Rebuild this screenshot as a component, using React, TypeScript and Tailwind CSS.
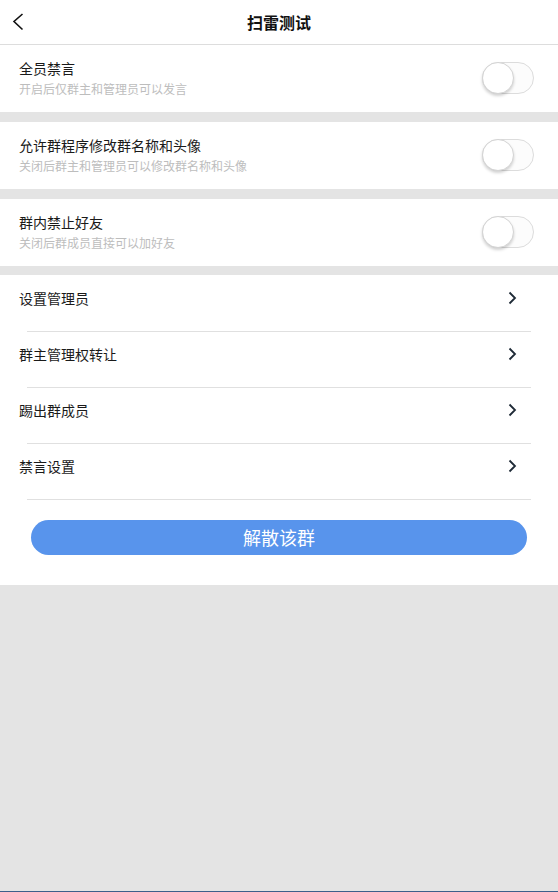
import React from "react";

const font = { fontFamily: '"Noto Sans CJK SC", "Noto Sans", sans-serif' };

function Toggle() {
  return (
    <div className="relative w-[52px] h-[32px] mb-[2px] rounded-full border border-[#dcdcdc] bg-[#fcfcfc] shrink-0">
      <div className="absolute left-[-1px] top-[-1px] w-[32px] h-[32px] rounded-full bg-white border border-[#d4d4d4] shadow-[0_2px_3px_rgba(0,0,0,0.18)]" />
    </div>
  );
}

function SwitchRow({ title, sub }: { title: string; sub: string }) {
  return (
    <div className="h-[67px] bg-white flex items-center justify-between pl-[19px] pr-[24px]">
      <div className="flex flex-col pb-[2px]">
        <div className="text-[14px] leading-[20px] text-[#1a1a1a]">{title}</div>
        <div className="text-[12px] leading-[18px] mt-[2px] text-[#bdbdbd]">{sub}</div>
      </div>
      <Toggle />
    </div>
  );
}

function Chevron() {
  return (
    <svg width="9" height="14" viewBox="0 0 9 14" className="shrink-0">
      <path d="M1.5 1.5 L7 7 L1.5 12.5" fill="none" stroke="#1e2a36" strokeWidth="1.8" />
    </svg>
  );
}

function LinkRow({ title }: { title: string }) {
  return (
    <div className="flex flex-col">
      <div className="h-[55px] flex items-center justify-between pl-[19px] pr-[41px] pb-[12px]">
        <span className="text-[14px] leading-[20px] text-[#1a1a1a]">{title}</span>
        <Chevron />
      </div>
      <div className="mx-[27px] h-px bg-[#e0e0e0]" />
    </div>
  );
}

export default function App() {
  return (
    <div style={font} className="w-[558px] h-[892px] flex flex-col bg-[#e4e4e4]">
      <div className="h-[44px] bg-white relative flex items-center justify-center border-b border-[#dddddd] box-content">
        <svg width="12" height="18" viewBox="0 0 12 18" className="absolute left-[12px] top-[13px]">
          <path d="M10.5 1 L2 8.5 L10.5 16.5" fill="none" stroke="#111" strokeWidth="1.6" />
        </svg>
        <span className="text-[16px] font-bold text-[#111] leading-[20px]">扫雷测试</span>
      </div>
      <SwitchRow title="全员禁言" sub="开启后仅群主和管理员可以发言" />
      <div className="h-[10px]" />
      <SwitchRow title="允许群程序修改群名称和头像" sub="关闭后群主和管理员可以修改群名称和头像" />
      <div className="h-[10px]" />
      <SwitchRow title="群内禁止好友" sub="关闭后群成员直接可以加好友" />
      <div className="h-[9px]" />
      <div className="bg-white flex flex-col pt-[1px]">
        <LinkRow title="设置管理员" />
        <LinkRow title="群主管理权转让" />
        <LinkRow title="踢出群成员" />
        <LinkRow title="禁言设置" />
        <div className="px-[31px] pt-[20px] pb-[30px]">
          <button className="w-full h-[35px] rounded-full bg-[#5894ec] text-white text-[18px] leading-[35px]">
            解散该群
          </button>
        </div>
      </div>
      <div className="flex-1" />
      <div className="h-px bg-[#3d5f8a]" />
    </div>
  );
}
